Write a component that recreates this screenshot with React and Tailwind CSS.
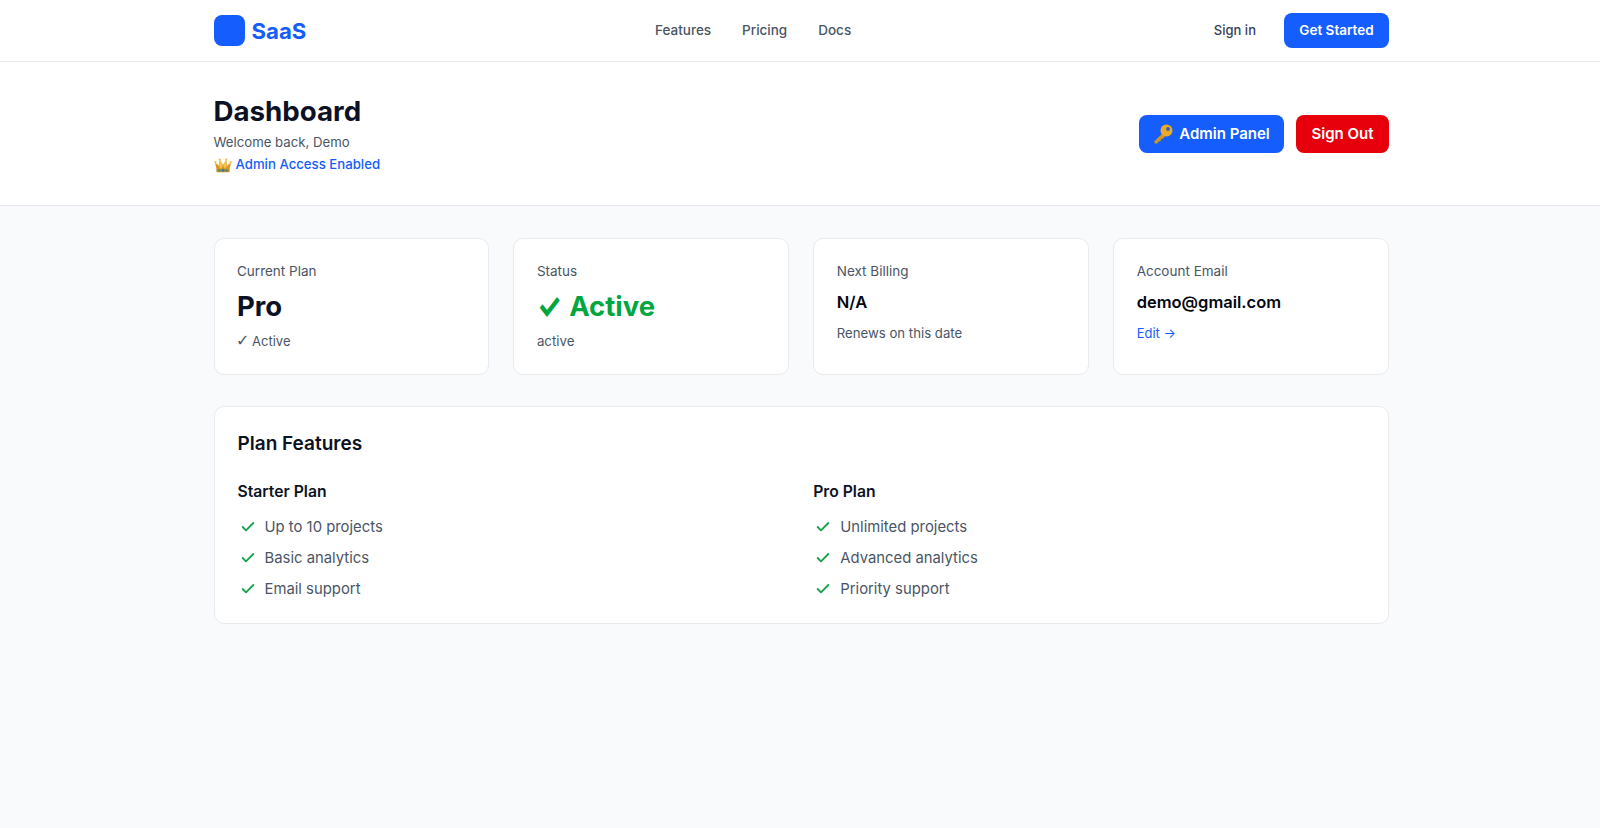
import React from "react";
import { Check } from "lucide-react";

function Crown() {
  return (
    <svg viewBox="0 0 18 16" className="w-[18px] h-[16px] mt-[2px]">
      <path d="M2.5 12.5 L1 5.5 L5 8.5 L5.8 3 L9 8 L12.2 3 L13 8.5 L17 5.5 L15.5 12.5 Z" fill="#d9982a" />
      <path d="M5.8 3 L5 8.5 L7 12.5 L9 8 Z M12.2 3 L13 8.5 L11 12.5 L9 8 Z" fill="#f4c24a" />
      <circle cx="1.4" cy="5.2" r="1.1" fill="#f4c24a" />
      <circle cx="5.8" cy="2.6" r="1.2" fill="#f4c24a" />
      <circle cx="12.2" cy="2.6" r="1.2" fill="#f4c24a" />
      <circle cx="16.6" cy="5.2" r="1.1" fill="#f4c24a" />
      <rect x="2.4" y="11.8" width="13.2" height="3.4" rx="1.2" fill="#c98a22" />
      <circle cx="5.4" cy="13.4" r="1.2" fill="#3c9a5f" />
      <circle cx="9" cy="13.2" r="1.5" fill="#2f7fb5" />
      <circle cx="12.6" cy="13.4" r="1.2" fill="#3c9a5f" />
    </svg>
  );
}

function Key() {
  return (
    <svg viewBox="0 0 20 20" className="w-[20px] h-[20px]">
      <path d="M11 8 L1.5 17 L1.5 19.5 L4.5 19.5 L5.5 17.5 L7.5 17.2 L8 15.2 L9.8 14.8 L14 10.5 Z" fill="#d3941f" />
      <circle cx="13.5" cy="6.5" r="6" fill="#e8ab2c" />
      <circle cx="15" cy="5" r="1.9" fill="#3a5fa8" />
    </svg>
  );
}

function StatCard({ label, children }) {
  return (
    <div className="bg-white border border-[#e8eaee] rounded-[10px] p-[22.5px] pt-[23px] h-[137px]">
      <p className="text-[13.5px] leading-[18px] text-gray-600">{label}</p>
      {children}
    </div>
  );
}

function PlanList({ title, items }) {
  return (
    <div>
      <h3 className="text-[15.7px] leading-6 font-semibold text-[#0c1224] mb-[11px]">{title}</h3>
      <ul className="space-y-[7px]">
        {items.map((item) => (
          <li key={item} className="flex items-center gap-[9px] text-[14.85px] leading-6 text-gray-600">
            <Check strokeWidth={2.75} className="w-4 h-4 ml-[2px] text-[#16a34a]" />
            {item}
          </li>
        ))}
      </ul>
    </div>
  );
}

export default function App() {
  return (
    <div className="min-h-[828px] bg-gray-50 font-['Inter',sans-serif]">
      <header className="bg-white border-b border-gray-200 h-[62px]">
        <div className="ml-[213.5px] w-[1175.5px] h-full flex items-center justify-between">
          <div className="flex items-center gap-[7px]">
            <div className="w-[31px] h-[31px] rounded-lg bg-blue-600" />
            <span className="text-[22.2px] font-bold text-blue-600">SaaS</span>
          </div>
          <nav className="flex items-center gap-[31px] mr-[14px] text-[13.5px] font-medium text-gray-600">
            <span>Features</span>
            <span>Pricing</span>
            <span>Docs</span>
          </nav>
          <div className="flex items-center gap-[28px]">
            <span className="text-[13px] font-medium text-gray-700">Sign in</span>
            <button className="h-[35px] w-[105px] rounded-lg bg-blue-600 text-white text-[13.5px] font-semibold">
              Get Started
            </button>
          </div>
        </div>
      </header>

      <section className="bg-white border-b border-gray-200 h-[144px]">
        <div className="ml-[213.5px] w-[1175.5px] h-full flex items-center justify-between">
          <div>
            <h1 className="text-[27.7px] leading-9 font-bold text-[#0c1224]">Dashboard</h1>
            <p className="text-[13.2px] leading-5 text-gray-600 mt-[3px]">Welcome back, Demo</p>
            <p className="flex items-center gap-1 text-[13.2px] leading-5 font-medium text-blue-600 mt-[2px]">
              <Crown />
              Admin Access Enabled
            </p>
          </div>
          <div className="flex items-center gap-3 mt-[1px]">
            <button className="flex items-center justify-center gap-[6px] h-[38px] w-[145px] rounded-lg bg-blue-600 text-white text-[15px] font-semibold">
              <Key />
              Admin Panel
            </button>
            <button className="h-[38px] w-[93px] rounded-lg bg-red-600 text-white text-[15px] font-semibold">
              Sign Out
            </button>
          </div>
        </div>
      </section>

      <main className="ml-[213.5px] w-[1175.5px] pt-[31.5px]">
        <div className="grid grid-cols-4 gap-6">
          <StatCard label="Current Plan">
            <p className="text-[27.5px] leading-9 font-bold text-[#0c1224] mt-[8px]">Pro</p>
            <p className="text-[13px] leading-5 text-gray-600 mt-[7px]">
              <span className="font-['DejaVu_Sans'] text-[16px] leading-none -ml-[1px] -mr-[1px]">✓</span> Active
            </p>
          </StatCard>
          <StatCard label="Status">
            <p className="text-[27.5px] leading-9 font-bold text-green-600 mt-[8px]">
              <span className="inline-block scale-y-[1.3] mr-[1.5px]">✓</span> Active
            </p>
            <p className="text-[13.3px] leading-5 text-gray-600 mt-[7px]">active</p>
          </StatCard>
          <StatCard label="Next Billing">
            <p className="text-[16.5px] leading-7 font-semibold text-gray-950 mt-[8px]">N/A</p>
            <p className="text-[13.2px] leading-5 text-gray-600 mt-[7px]">Renews on this date</p>
          </StatCard>
          <StatCard label="Account Email">
            <p className="text-[16.5px] leading-7 font-semibold text-gray-950 mt-[8px]">demo@gmail.com</p>
            <p className="text-[13px] leading-5 text-blue-600 mt-[7px]">Edit →</p>
          </StatCard>
        </div>

        <div className="bg-white border border-[#e8eaee] rounded-[10px] p-[23px] mt-[31px] h-[218px]">
          <h2 className="text-[19px] leading-7 font-semibold text-[#0c1224] mb-[22px]">Plan Features</h2>
          <div className="grid grid-cols-2 gap-6">
            <PlanList title="Starter Plan" items={["Up to 10 projects", "Basic analytics", "Email support"]} />
            <PlanList title="Pro Plan" items={["Unlimited projects", "Advanced analytics", "Priority support"]} />
          </div>
        </div>
      </main>
    </div>
  );
}
